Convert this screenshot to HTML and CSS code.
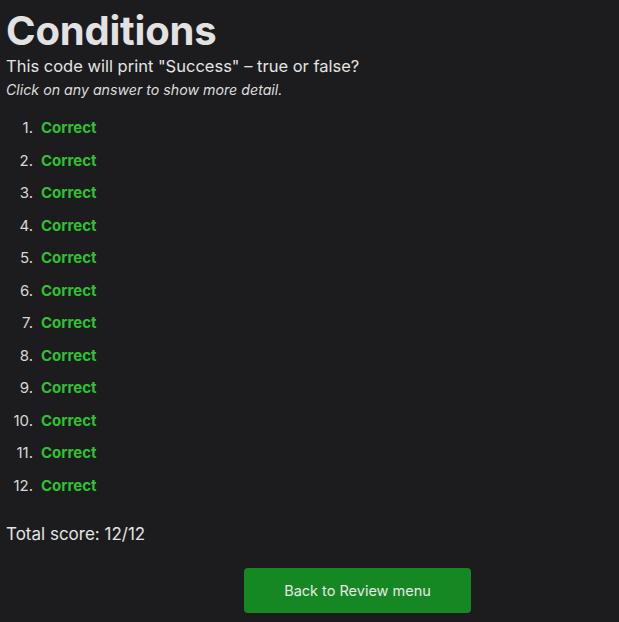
FILE: index.html
```html
<!DOCTYPE html>
<html>
<head>
<meta charset="utf-8">
<link rel="stylesheet" href="styles.css">
</head>
<body>
<div class="page">
  <h1 class="title">Conditions</h1>
  <p class="question">This code will print "Success" – true or false?</p>
  <p class="hint">Click on any answer to show more detail.</p>
  <ol class="answers">
    <li><span class="ok">Correct</span></li>
    <li><span class="ok">Correct</span></li>
    <li><span class="ok">Correct</span></li>
    <li><span class="ok">Correct</span></li>
    <li><span class="ok">Correct</span></li>
    <li><span class="ok">Correct</span></li>
    <li><span class="ok">Correct</span></li>
    <li><span class="ok">Correct</span></li>
    <li><span class="ok">Correct</span></li>
    <li><span class="ok">Correct</span></li>
    <li><span class="ok">Correct</span></li>
    <li><span class="ok">Correct</span></li>
  </ol>
  <p class="score">Total score: 12/12</p>
  <div class="actions">
    <button class="back">Back to Review menu</button>
  </div>
</div>
</body>
</html>
```

FILE: styles.css
```css
html, body {
  margin: 0;
  padding: 0;
  background: #1c1c1e;
}
body {
  font-family: Inter, "Noto Sans", sans-serif;
  color: #e4e4e4;
}
.page {
  padding: 8px 5px 0 6px;
}
.title {
  margin: 0;
  font-size: 40px;
  line-height: 46px;
  font-weight: 700;
  color: #e2e2e2;
  letter-spacing: -0.2px;
}
.question {
  margin: 1px 0 0 0;
  font-size: 16.5px;
  line-height: 22px;
}
.hint {
  margin: 3px 0 0 0;
  font-size: 14.2px;
  line-height: 20px;
  font-style: italic;
  color: #dcdcdc;
}
.answers {
  margin: 17px 0 0 0;
  padding: 0;
  list-style: none;
  counter-reset: item;
}
.answers li {
  display: flex;
  counter-increment: item;
  font-size: 15px;
  line-height: 22.5px;
  margin-bottom: 10px;
  color: #d8d8d8;
}
.answers li::before {
  content: counter(item) ".";
  width: 27px;
  margin-right: 8px;
  text-align: right;
  font-weight: 400;
}
.ok {
  color: #2ec22e;
  font-weight: 700;
}
.score {
  margin: 26px 0 0 0;
  font-size: 17px;
  line-height: 22px;
}
.actions {
  display: flex;
  justify-content: center;
  margin-top: 23px;
}
.back {
  width: 227px;
  height: 45px;
  margin-left: 95px;
  border: none;
  border-radius: 4px;
  background: #158723;
  color: #e8e8e8;
  font-family: Inter, "Noto Sans", sans-serif;
  font-size: 14.5px;
}
```
